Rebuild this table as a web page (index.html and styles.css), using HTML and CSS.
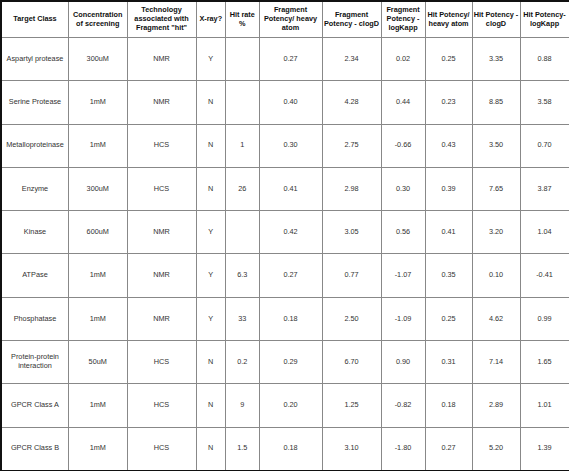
FILE: index.html
```html
<!DOCTYPE html>
<html>
<head>
<meta charset="utf-8">
<link rel="stylesheet" href="styles.css">
</head>
<body>
<table class="data">
<colgroup>
<col class="c1"><col class="c2"><col class="c3"><col class="c4"><col class="c5"><col class="c6"><col class="c7"><col class="c8"><col class="c9"><col class="c10"><col class="c11">
</colgroup>
<thead>
<tr>
<th>Target Class</th>
<th>Concentration<br>of screening</th>
<th>Technology<br>associated with<br>Fragment "hit"</th>
<th>X-ray?</th>
<th>Hit rate<br>%</th>
<th>Fragment<br>Potency/ heavy<br>atom</th>
<th>Fragment<br>Potency - clogD</th>
<th>Fragment<br>Potency -<br>logKapp</th>
<th>Hit Potency/<br>heavy atom</th>
<th>Hit Potency -<br>clogD</th>
<th>Hit Potency-<br>logKapp</th>
</tr>
</thead>
<tbody>
<tr><td>Aspartyl protease</td><td>300uM</td><td>NMR</td><td>Y</td><td></td><td>0.27</td><td>2.34</td><td>0.02</td><td>0.25</td><td>3.35</td><td>0.88</td></tr>
<tr><td>Serine Protease</td><td>1mM</td><td>NMR</td><td>N</td><td></td><td>0.40</td><td>4.28</td><td>0.44</td><td>0.23</td><td>8.85</td><td>3.58</td></tr>
<tr><td>Metalloproteinase</td><td>1mM</td><td>HCS</td><td>N</td><td>1</td><td>0.30</td><td>2.75</td><td>-0.66</td><td>0.43</td><td>3.50</td><td>0.70</td></tr>
<tr><td>Enzyme</td><td>300uM</td><td>HCS</td><td>N</td><td>26</td><td>0.41</td><td>2.98</td><td>0.30</td><td>0.39</td><td>7.65</td><td>3.87</td></tr>
<tr><td>Kinase</td><td>600uM</td><td>NMR</td><td>Y</td><td></td><td>0.42</td><td>3.05</td><td>0.56</td><td>0.41</td><td>3.20</td><td>1.04</td></tr>
<tr><td>ATPase</td><td>1mM</td><td>NMR</td><td>Y</td><td>6.3</td><td>0.27</td><td>0.77</td><td>-1.07</td><td>0.35</td><td>0.10</td><td>-0.41</td></tr>
<tr><td>Phosphatase</td><td>1mM</td><td>NMR</td><td>Y</td><td>33</td><td>0.18</td><td>2.50</td><td>-1.09</td><td>0.25</td><td>4.62</td><td>0.99</td></tr>
<tr><td>Protein-protein<br>interaction</td><td>50uM</td><td>HCS</td><td>N</td><td>0.2</td><td>0.29</td><td>6.70</td><td>0.90</td><td>0.31</td><td>7.14</td><td>1.65</td></tr>
<tr><td>GPCR Class A</td><td>1mM</td><td>HCS</td><td>N</td><td>9</td><td>0.20</td><td>1.25</td><td>-0.82</td><td>0.18</td><td>2.89</td><td>1.01</td></tr>
<tr><td>GPCR Class B</td><td>1mM</td><td>HCS</td><td>N</td><td>1.5</td><td>0.18</td><td>3.10</td><td>-1.80</td><td>0.27</td><td>5.20</td><td>1.39</td></tr>
</tbody>
</table>
</body>
</html>
```
FILE: styles.css
```css
html, body {
  margin: 0;
  padding: 0;
  background: #ffffff;
}
body {
  font-family: "Liberation Sans", Arial, sans-serif;
  color: #222;
}
.data {
  border-collapse: collapse;
  table-layout: fixed;
  width: 568px;
  border-top: 2px solid #111;
  border-left: 2px solid #111;
  border-bottom: 2px solid #111;
  border-right: 1px solid #555;
}
.c1 { width: 67.5px; }
.c2 { width: 58.5px; }
.c3 { width: 69px; }
.c4 { width: 29.5px; }
.c5 { width: 33.5px; }
.c6 { width: 63px; }
.c7 { width: 59px; }
.c8 { width: 44px; }
.c9 { width: 47px; }
.c10 { width: 48px; }
.c11 { width: 49px; }
.data th, .data td {
  border: 1px solid #888;
  padding: 0;
  text-align: center;
  vertical-align: middle;
  font-size: 7.3px;
  line-height: 8.8px;
  white-space: nowrap;
  overflow: visible;
}
.data th {
  font-weight: bold;
  color: #111;
  height: 35px;
}
.data td {
  height: 42.3px;
  color: #333;
}
```
